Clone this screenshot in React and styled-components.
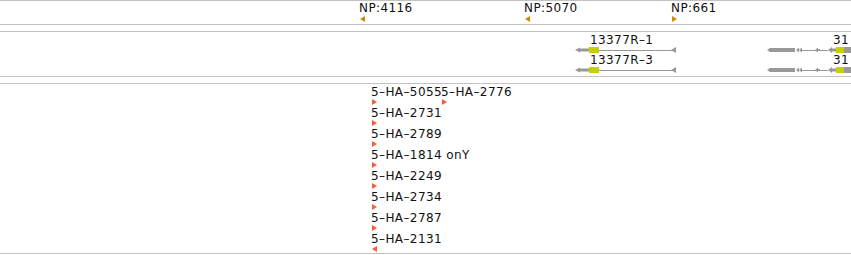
import React from "react";
import styled, { createGlobalStyle } from "styled-components";

const GlobalStyle = createGlobalStyle`
  html, body {
    margin: 0;
    padding: 0;
    background: #ffffff;
  }
  body {
    width: 851px;
    height: 255px;
    overflow: hidden;
    font-family: "DejaVu Sans", Verdana, sans-serif;
  }
`;

const Browser = styled.div`
  width: 851px;
  display: flex;
  flex-direction: column;
  gap: 6px;
`;

const Track = styled.div`
  position: relative;
  height: ${(p) => p.$height}px;
  border-top: 1px solid #c2c2c2;
  border-bottom: 1px solid #c2c2c2;
  overflow: hidden;
`;

// a feature sits on the track canvas at its genomic coordinate
const Feature = styled.div`
  position: absolute;
  display: flex;
  flex-direction: column;
  align-items: flex-start;
`;

const Label = styled.span`
  display: block;
  margin-left: ${(p) => p.$indent ?? -1}px;
  font-size: 12px;
  line-height: 12px;
  letter-spacing: 0.4px;
  color: #111;
  white-space: nowrap;
`;

const Marker = styled.svg`
  display: block;
  margin-top: ${(p) => p.$gap}px;
  fill: ${(p) => p.$color};
`;

const Glyph = styled.svg`
  display: block;
  margin-top: 1px;
  overflow: visible;
`;

const ORANGE = "#d08a00";
const RED = "#f2603e";
const GRAY = "#999999";
const YELLOW = "#c6d000";

function Arrow({ dir, color, gap }) {
  return (
    <Marker width="5" height="6" viewBox="0 0 5 6" $color={color} $gap={gap}>
      {dir === "right" ? (
        <polygon points="0,0 5,3 0,6" />
      ) : (
        <polygon points="5,0 0,3 5,6" />
      )}
    </Marker>
  );
}

function ShortGene() {
  return (
    <Glyph width="102" height="6">
      <polygon points="0,3 5,0.5 5,5.5" fill={GRAY} />
      <rect x="5" y="1.5" width="9" height="3" fill={GRAY} />
      <rect x="14" y="0" width="10" height="6" fill={YELLOW} />
      <rect x="24" y="3" width="74" height="1" fill={GRAY} />
      <polygon points="96,3 101,0 101,6" fill={GRAY} />
    </Glyph>
  );
}

function LongGene() {
  return (
    <Glyph width="90" height="6">
      <polygon points="0,3 3,1 28,1 28,5 3,5" fill={GRAY} />
      <polygon points="29,3 32,0.5 32,5.5" fill={GRAY} />
      <polygon points="32,3 35,0.5 35,5.5" fill={GRAY} />
      <rect x="35" y="3" width="26" height="1" fill={GRAY} />
      <polygon points="48,3 51,0.5 51,5.5" fill={GRAY} />
      <rect x="51" y="2" width="2" height="2" fill={GRAY} />
      <polygon points="61,3 65,0 65,6" fill={GRAY} />
      <rect x="65" y="1.5" width="4" height="3" fill={GRAY} />
      <rect x="69" y="0" width="8" height="6" fill={YELLOW} />
      <rect x="77" y="0" width="13" height="6" fill={GRAY} />
    </Glyph>
  );
}

const npFeatures = [
  { x: 360, name: "NP:4116", dir: "left" },
  { x: 525, name: "NP:5070", dir: "left" },
  { x: 672, name: "NP:661", dir: "right" },
];

const genes = [
  { x: 575, indent: 15, name: "13377R\u20131", row: 0, Shape: ShortGene },
  { x: 575, indent: 15, name: "13377R\u20133", row: 1, Shape: ShortGene },
  { x: 767, indent: 66, name: "31", row: 0, Shape: LongGene },
  { x: 767, indent: 66, name: "31", row: 1, Shape: LongGene },
];

const haFeatures = [
  { x: 372, row: 0, name: "5\u2013HA\u20135055", dir: "right" },
  { x: 442, row: 0, name: "5\u2013HA\u20132776", dir: "right" },
  { x: 372, row: 1, name: "5\u2013HA\u20132731", dir: "right" },
  { x: 372, row: 2, name: "5\u2013HA\u20132789", dir: "right" },
  { x: 372, row: 3, name: "5\u2013HA\u20131814 onY", dir: "right" },
  { x: 372, row: 4, name: "5\u2013HA\u20132249", dir: "right" },
  { x: 372, row: 5, name: "5\u2013HA\u20132734", dir: "right" },
  { x: 372, row: 6, name: "5\u2013HA\u20132787", dir: "right" },
  { x: 372, row: 7, name: "5\u2013HA\u20132131", dir: "left" },
];

export default function App() {
  return (
    <>
      <GlobalStyle />
      <Browser>
        <Track $height={23}>
          {npFeatures.map((f) => (
            <Feature key={f.name} style={{ left: f.x, top: 1 }}>
              <Label>{f.name}</Label>
              <Arrow dir={f.dir} color={ORANGE} gap={2} />
            </Feature>
          ))}
        </Track>

        <Track $height={44}>
          {genes.map((g, i) => (
            <Feature key={i} style={{ left: g.x, top: 2 + g.row * 20 }}>
              <Label $indent={g.indent}>{g.name}</Label>
              <g.Shape />
            </Feature>
          ))}
        </Track>

        <Track $height={169}>
          {haFeatures.map((f) => (
            <Feature key={f.name} style={{ left: f.x, top: 2 + f.row * 21 }}>
              <Label>{f.name}</Label>
              <Arrow dir={f.dir} color={RED} gap={1} />
            </Feature>
          ))}
        </Track>
      </Browser>
    </>
  );
}
